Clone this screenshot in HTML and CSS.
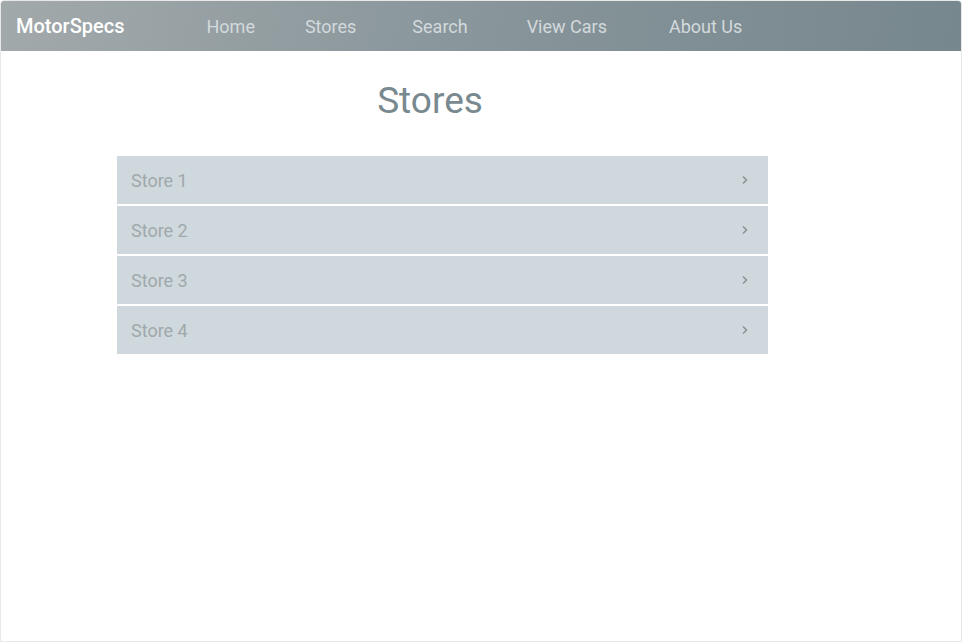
FILE: index.html
```html
<!DOCTYPE html>
<html>
<head>
<meta charset="utf-8">
<link rel="stylesheet" href="styles.css">
</head>
<body>
<div class="frame">
  <nav class="navbar">
    <span class="brand">MotorSpecs</span>
    <a class="link l1">Home</a>
    <a class="link l2">Stores</a>
    <a class="link l3">Search</a>
    <a class="link l4">View Cars</a>
    <a class="link l5">About Us</a>
  </nav>
  <main class="content">
    <h1 class="title">Stores</h1>
    <ul class="list">
      <li class="item"><span>Store 1</span><svg class="chev" width="8" height="10" viewBox="0 0 8 10"><path d="M2 1.5 L5.5 5 L2 8.5" fill="none" stroke="#8a9194" stroke-width="1.5"/></svg></li>
      <li class="item"><span>Store 2</span><svg class="chev" width="8" height="10" viewBox="0 0 8 10"><path d="M2 1.5 L5.5 5 L2 8.5" fill="none" stroke="#8a9194" stroke-width="1.5"/></svg></li>
      <li class="item"><span>Store 3</span><svg class="chev" width="8" height="10" viewBox="0 0 8 10"><path d="M2 1.5 L5.5 5 L2 8.5" fill="none" stroke="#8a9194" stroke-width="1.5"/></svg></li>
      <li class="item"><span>Store 4</span><svg class="chev" width="8" height="10" viewBox="0 0 8 10"><path d="M2 1.5 L5.5 5 L2 8.5" fill="none" stroke="#8a9194" stroke-width="1.5"/></svg></li>
    </ul>
  </main>
</div>
</body>
</html>
```
FILE: styles.css
```css
html, body {
  margin: 0;
  padding: 0;
  background: #ffffff;
}
body {
  font-family: Roboto, "Liberation Sans", sans-serif;
}
.frame {
  box-sizing: border-box;
  width: 962px;
  height: 642px;
  border: 1px solid #e8e8e8;
  border-radius: 4px 4px 0 0;
  overflow: hidden;
}
.navbar {
  height: 50px;
  display: flex;
  align-items: center;
  background: linear-gradient(100deg, #a2a9ab 0%, #8a979c 45%, #76878d 100%);
}
.brand {
  margin-left: 15px;
  font-size: 20px;
  font-weight: 500;
  color: #ffffff;
}
.link {
  font-size: 18px;
  color: #d3d9dc;
}
.l1 { margin-left: 82px; }
.l2 { margin-left: 50px; }
.l3 { margin-left: 56px; }
.l4 { margin-left: 59px; }
.l5 { margin-left: 62px; }
.content {
  padding-left: 116px;
}
.title {
  margin: 0;
  width: 626px;
  padding-top: 28px;
  height: 77px;
  box-sizing: border-box;
  text-align: center;
  font-size: 37px;
  font-weight: 400;
  color: #78898f;
  line-height: 44px;
}
.list {
  list-style: none;
  margin: 28px 0 0 0;
  padding: 0;
  width: 651px;
  display: flex;
  flex-direction: column;
  gap: 2px;
}
.item {
  height: 48px;
  background: #cfd8dc;
  display: flex;
  align-items: center;
  justify-content: space-between;
  padding: 0 19px 0 14px;
  font-size: 18px;
  color: #a0a8ab;
}
.chev {
  margin-top: 0;
}
```
